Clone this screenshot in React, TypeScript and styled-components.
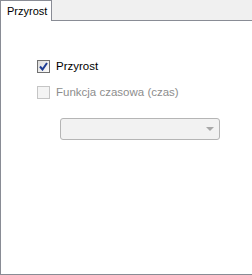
import React from 'react';
import styled, { createGlobalStyle } from 'styled-components';

const Global = createGlobalStyle`
    body {
        margin: 0;
        background: #fff;
        font-family: "Liberation Sans", Arial, sans-serif;
        font-size: 11px;
    }
`

function CheckBox({ checked, disabled }: { checked?: boolean; disabled?: boolean }) {
    return (
        <Box disabled={disabled}>
            {checked && (
                <svg width="9" height="9" viewBox="0 0 9 9">
                    <path d="M1 4.5 L3.5 7.5 L8 1" fill="none" stroke="#1d3c93" strokeWidth="2" />
                </svg>
            )}
        </Box>
    )
}

function App() {
    return (
        <>
            <Global />
            <Window>
                <TabStrip>
                    <Tab>Przyrost</Tab>
                </TabStrip>
                <Panel>
                    <Row>
                        <CheckBox checked />
                        <Label>Przyrost</Label>
                    </Row>
                    <Row>
                        <CheckBox disabled />
                        <Label disabled>Funkcja czasowa (czas)</Label>
                    </Row>
                    <Combo>
                        <Arrow />
                    </Combo>
                </Panel>
            </Window>
        </>
    );
}

const Window = styled.div`
    width: 252px;
    height: 275px;
    display: flex;
    flex-direction: column;
    overflow: hidden;
`

const TabStrip = styled.div`
    height: 20px;
    background: #f0f0f0;
    border-bottom: 1px solid #898c95;
    display: flex;
`

const Tab = styled.div`
    width: 52px;
    height: 21px;
    box-sizing: border-box;
    background: #fff;
    border: 1px solid #898c95;
    border-bottom: none;
    margin-bottom: -1px;
    padding: 3px 0 0 6px;
    color: #000;
    line-height: 14px;
    position: relative;
    z-index: 1;
`

const Panel = styled.div`
    height: 254px;
    border-left: 1px solid #898c95;
    border-bottom: 1px solid #898c95;
    padding: 39px 0 0 36px;
    display: flex;
    flex-direction: column;
    gap: 13px;
    box-sizing: border-box;
`

const Row = styled.div`
    display: flex;
    align-items: center;
    gap: 6px;
    height: 13px;
`

const Box = styled.div<{ disabled?: boolean }>`
    width: 13px;
    height: 13px;
    box-sizing: border-box;
    border: 1px solid ${p => (p.disabled ? '#c5c5c5' : '#707070')};
    background: ${p => (p.disabled ? '#f4f4f4' : 'linear-gradient(135deg, #dcdcdc, #fbfbfb)')};
    display: flex;
    align-items: center;
    justify-content: center;
`

const Label = styled.span<{ disabled?: boolean }>`
    font-size: 11.5px;
    color: ${p => (p.disabled ? '#8d8d8d' : '#000')};
    line-height: 13px;
`

const Combo = styled.div`
    margin: 6px 0 0 23px;
    width: 160px;
    height: 22px;
    box-sizing: border-box;
    border: 1px solid #b5b5b5;
    border-radius: 3px;
    background: #f2f2f2;
    display: flex;
    align-items: center;
    justify-content: flex-end;
    padding-right: 5px;
`

const Arrow = styled.div`
    width: 0;
    height: 0;
    border-left: 4px solid transparent;
    border-right: 4px solid transparent;
    border-top: 4px solid #a8a8a8;
`

export default App;
